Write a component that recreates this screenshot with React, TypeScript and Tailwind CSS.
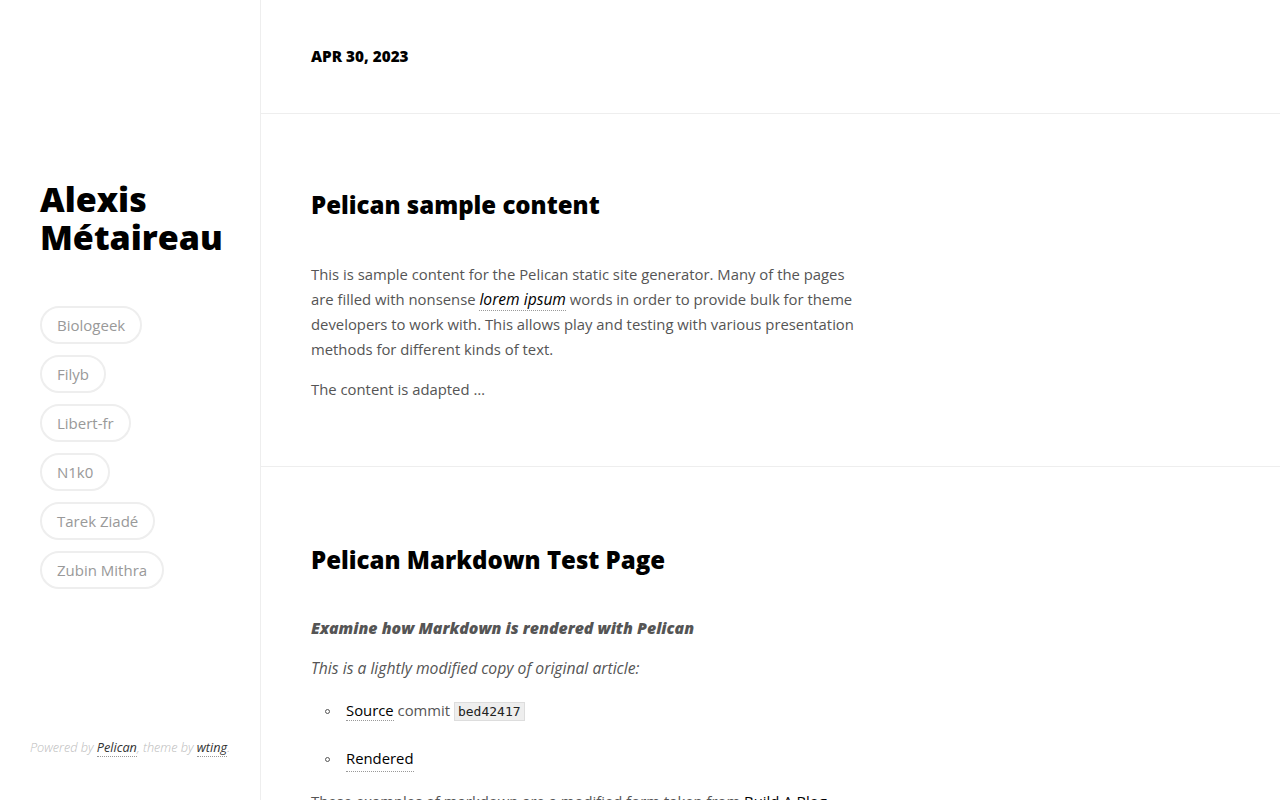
import React from "react";

const tags = ["Biologeek", "Filyb", "Libert-fr", "N1k0", "Tarek Ziadé", "Zubin Mithra"];

const linkCls = "text-[#000] border-b border-dotted border-[#999]";

export default function App() {
  return (
    <div className="flex min-h-screen bg-white" style={{ fontFamily: '"Open Sans", "Noto Sans", sans-serif' }}>
      <aside className="fixed left-0 top-0 flex h-screen w-[261px] flex-col border-r border-[#eee] bg-white">
        <div className="flex-1 pl-10 pt-[180px]">
          <h1 className="text-[34px] font-extrabold leading-[38px] text-black">Alexis Métaireau</h1>
          <ul className="mt-[50px] flex flex-col items-start gap-[11px]">
            {tags.map((t) => (
              <li key={t} className="rounded-full border-2 border-[#eee] px-[15px] py-[7px] text-[15px] leading-[20px] text-[#999]">
                {t}
              </li>
            ))}
          </ul>
        </div>
        <p className="pb-[44px] text-center text-[12.7px] italic font-light leading-[18px] text-[#bbb]">
          Powered by <span className="text-[#333] font-normal border-b border-dotted border-[#999]">Pelican</span>, theme by{" "}
          <span className="text-[#333] font-normal border-b border-dotted border-[#999]">wting</span>.
        </p>
      </aside>
      <main className="ml-[261px] flex-1">
        <header className="border-b border-[#eee] px-[50px] py-[44px]">
          <p className="text-[15.3px] font-extrabold uppercase leading-[25px] text-black">Apr 30, 2023</p>
        </header>
        <article className="border-b border-[#eee] px-[50px] pt-[73px] pb-[64px]">
          <h2 className="text-[24px] font-extrabold leading-[36px] text-black">Pelican sample content</h2>
          <div className="mt-[39px] max-w-[550px] text-[14.85px] leading-[25px] text-[#555]">
            <p>
              This is sample content for the Pelican static site generator. Many of the pages are filled with nonsense{" "}
              <em className={`${linkCls} text-[15.6px]`}>lorem ipsum</em> words in order to provide bulk for theme developers to work with. This allows play and testing with various presentation methods for different kinds of text.
            </p>
            <p className="mt-[15px]">The content is adapted …</p>
          </div>
        </article>
        <article className="px-[50px] pt-[75px] pb-[65px]">
          <h2 className="text-[24px] font-extrabold leading-[36px] text-black">Pelican Markdown Test Page</h2>
          <div className="mt-[38px] max-w-[550px] text-[14.85px] leading-[25px] text-[#555]">
            <p className="text-[15.9px] font-extrabold italic">Examine how Markdown is rendered with Pelican</p>
            <p className="mt-[15px] text-[15.7px] italic">This is a lightly modified copy of original article:</p>
            <ul className="mt-[17px] pl-[14px]">
              <li className="flex items-center">
                <span className="mr-[16px] inline-block h-[5px] w-[5px] rounded-full border border-[#555]" />
                <span>
                  <span className={linkCls}>Source</span> commit{" "}
                  <code className="border border-[#ddd] bg-[#eee] px-[3px] py-[1px] text-[13px] text-[#222]" style={{ fontFamily: '"DejaVu Sans Mono", monospace' }}>bed42417</code>
                </span>
              </li>
              <li className="mt-[22px] flex items-center">
                <span className="mr-[16px] inline-block h-[5px] w-[5px] rounded-full border border-[#555]" />
                <span className={linkCls}>Rendered</span>
              </li>
            </ul>
            <p className="mt-[17px]">
              These examples of markdown are a modified form taken from <span className={linkCls}>Build A Blog</span>, which were in turn adapted from the original Markdown syntax documentation.
            </p>
          </div>
        </article>
      </main>
    </div>
  );
}
